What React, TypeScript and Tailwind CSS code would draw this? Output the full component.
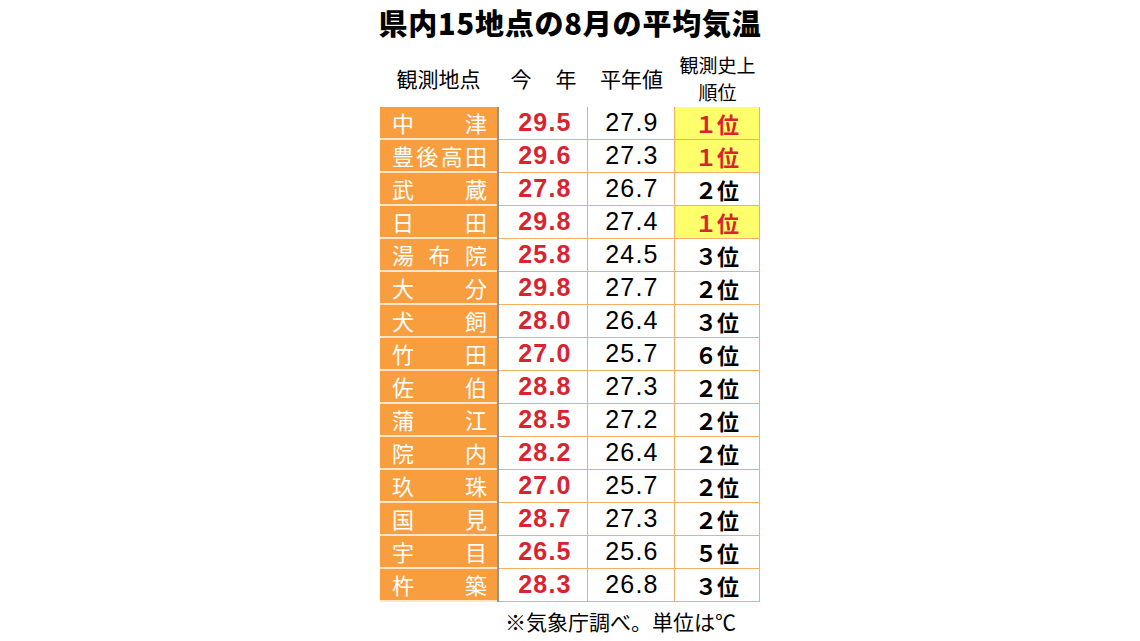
const rows = [
  { name: "中津", now: "29.5", avg: "27.9", rank: "１", top: true },
  { name: "豊後高田", now: "29.6", avg: "27.3", rank: "１", top: true },
  { name: "武蔵", now: "27.8", avg: "26.7", rank: "２" },
  { name: "日田", now: "29.8", avg: "27.4", rank: "１", top: true },
  { name: "湯布院", now: "25.8", avg: "24.5", rank: "３" },
  { name: "大分", now: "29.8", avg: "27.7", rank: "２" },
  { name: "犬飼", now: "28.0", avg: "26.4", rank: "３" },
  { name: "竹田", now: "27.0", avg: "25.7", rank: "６" },
  { name: "佐伯", now: "28.8", avg: "27.3", rank: "２" },
  { name: "蒲江", now: "28.5", avg: "27.2", rank: "２" },
  { name: "院内", now: "28.2", avg: "26.4", rank: "２" },
  { name: "玖珠", now: "27.0", avg: "25.7", rank: "２" },
  { name: "国見", now: "28.7", avg: "27.3", rank: "２" },
  { name: "宇目", now: "26.5", avg: "25.6", rank: "５" },
  { name: "杵築", now: "28.3", avg: "26.8", rank: "３" },
];

const jp = "font-['Noto_Sans_CJK_JP',sans-serif]";
const num = "font-['Liberation_Sans','Noto_Sans_CJK_JP',sans-serif]";

export default function App() {
  return (
    <div className={`w-[1140px] h-[641px] bg-white flex flex-col items-center text-black ${jp}`}>
      {/* title */}
      <h1 className="mt-[3px] h-[38px] text-[29px] leading-[38px] font-black tracking-[0.8px]">
        県内15地点の8月の平均気温
      </h1>

      {/* column headers */}
      <div className="mt-[8px] w-[380px] h-[58px] flex items-center text-[21px] leading-[26px]">
        <div className="w-[117px] text-center">観測地点</div>
        <div className="w-[91px] flex justify-center gap-[24px] pl-[2px]">
          <span>今</span>
          <span>年</span>
        </div>
        <div className="w-[87px] text-center">平年値</div>
        <div className="w-[85px] text-center text-[19px] leading-[27px]">
          観測史上
          <br />
          順位
        </div>
      </div>

      {/* table body */}
      <div className="w-[380px] flex flex-col">
        {rows.map((r, i) => (
          <div key={i} className="flex h-[33px]">
            <div
              className={`w-[117px] bg-[#f99e3e] text-white text-[22px] flex items-center justify-between pl-[12px] pr-[10px] border-b-2 border-[#fde6cc] ${
                i === rows.length - 1 ? "border-b-0" : ""
              }`}
            >
              {r.name.split("").map((c, j) => (
                <span key={j}>{c}</span>
              ))}
            </div>
            <div className="w-[2px] bg-[#9a8f86]" />
            <div className="w-[89px] bg-white border-b border-r border-[#f3ae68] flex items-center justify-center pl-[4px]">
              <span className={`${num} text-[25px] font-bold text-[#d92430] tracking-[1.2px]`}>{r.now}</span>
            </div>
            <div className="w-[87px] bg-white border-b border-r border-[#f3ae68] flex items-center justify-center pl-[2px]">
              <span className={`${num} text-[25px] tracking-[1.2px]`}>{r.avg}</span>
            </div>
            <div
              className={`w-[85px] border-b border-r border-[#f3ae68] flex items-center justify-center ${
                r.top ? "bg-[#ffff6b]" : "bg-white"
              }`}
            >
              <span className={`text-[22px] font-bold ${r.top ? "text-[#d92430]" : "text-black"}`}>
                {r.rank}位
              </span>
            </div>
          </div>
        ))}
      </div>

      <div className="mt-[4px] w-[380px] flex justify-end pr-[24px] text-[21px] leading-[30px]">
        ※気象庁調べ。単位は℃
      </div>
    </div>
  );
}
